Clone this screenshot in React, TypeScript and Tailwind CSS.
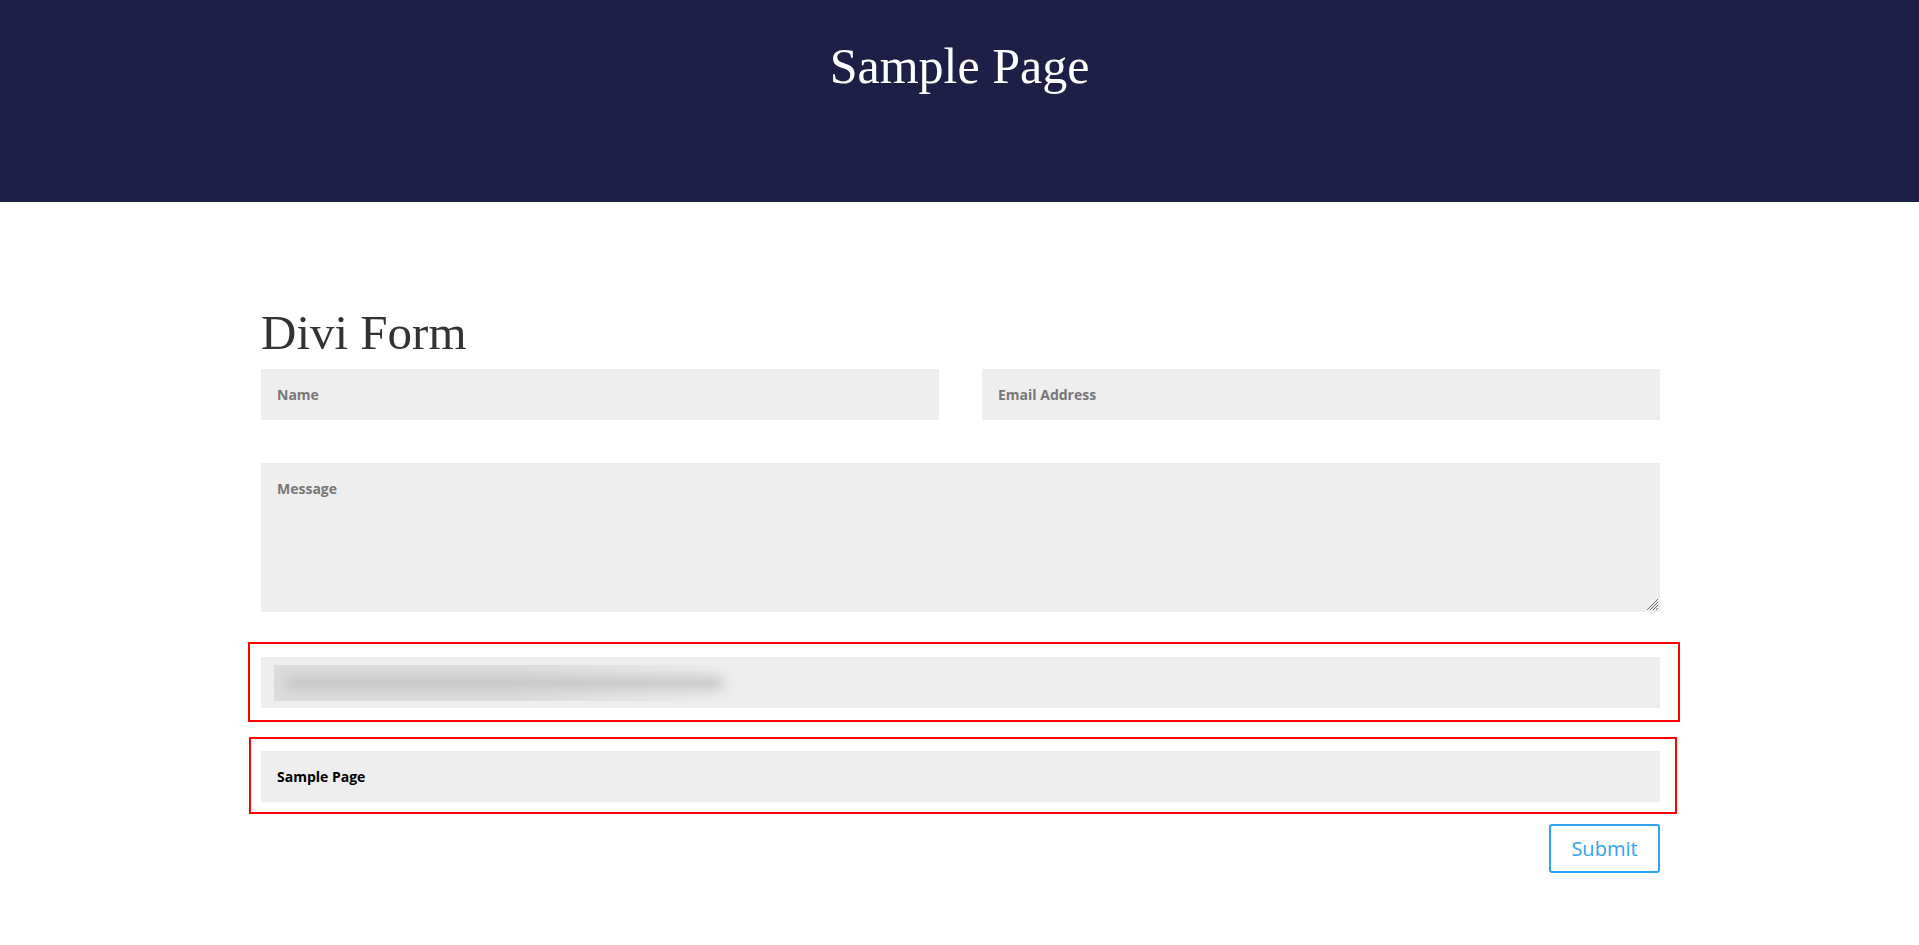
import React from 'react';

const sans = "font-['Open_Sans',_'Liberation_Sans',_sans-serif]";
const serif = "font-['Liberation_Serif',_'DejaVu_Serif',_serif]";

const Field = ({ label, dark = false }: { label: string; dark?: boolean }) => (
    <div className="h-[51px] bg-[#eeeeee] flex items-center px-4">
        <span className={`${sans} text-[14px] font-bold ${dark ? 'text-black' : 'text-[#777777]'}`}>{label}</span>
    </div>
);

const ResizeGrip = () => (
    <svg width="14" height="14" viewBox="0 0 14 14" className="absolute right-[1px] bottom-[1px]">
        <g stroke="#6b6b6b" strokeWidth="1">
            <line x1="13" y1="2" x2="2" y2="13" />
            <line x1="13" y1="5" x2="5" y2="13" />
            <line x1="13" y1="8" x2="8" y2="13" />
            <line x1="13" y1="11" x2="11" y2="13" />
        </g>
    </svg>
);

export default function App() {
    return (
        <div className="min-h-[945px] bg-white">
            {/* Header */}
            <header className="h-[202px] bg-[#1e1f46] pt-[41px] flex justify-center">
                <h1 className={`${serif} text-[50px] leading-[50px] text-white`}>Sample Page</h1>
            </header>

            {/* Form */}
            <main className="w-[1399px] ml-[261px] pt-[106px]">
                <h2 className={`${serif} text-[49px] leading-[49px] text-[#333333] mb-[12px]`}>Divi Form</h2>

                <div className="flex gap-[43px]">
                    <div className="flex-1"><Field label="Name" /></div>
                    <div className="flex-1"><Field label="Email Address" /></div>
                </div>

                <div className="relative mt-[43px] h-[149px] bg-[#eeeeee] px-4 pt-[13px]">
                    <span className={`${sans} text-[14px] font-bold text-[#777777]`}>Message</span>
                    <ResizeGrip />
                </div>

                {/* Highlighted fields */}
                <div className="mt-[30px] -ml-[13px] w-[1432px] border-2 border-[#ff0000] pt-[13px] pb-[12px] pl-[11px] pr-[18px]">
                    <div className="h-[51px] bg-[#eeeeee] flex items-center pl-[13px]">
                        <div className="relative w-[466px] h-[36px] bg-gradient-to-r from-[#dcdcdc] via-[#dcdcdc] to-[#eeeeee] overflow-hidden">
                            <div className="absolute left-[10px] top-[12px] w-[440px] h-[12px] rounded-full bg-[#c4c4c4] blur-[6px]" />
                        </div>
                    </div>
                </div>

                <div className="mt-[15px] -ml-[12px] w-[1428px] border-2 border-[#ff0000] pt-[12px] pb-[10px] pl-[10px] pr-[15px]">
                    <Field label="Sample Page" dark />
                </div>

                <div className="flex justify-end mt-[10px]">
                    <button className={`${sans} w-[111px] h-[49px] border-2 border-[#2ea3f2] rounded-[3px] text-[20px] text-[#2ea3f2] bg-white`}>
                        Submit
                    </button>
                </div>
            </main>
        </div>
    );
}
